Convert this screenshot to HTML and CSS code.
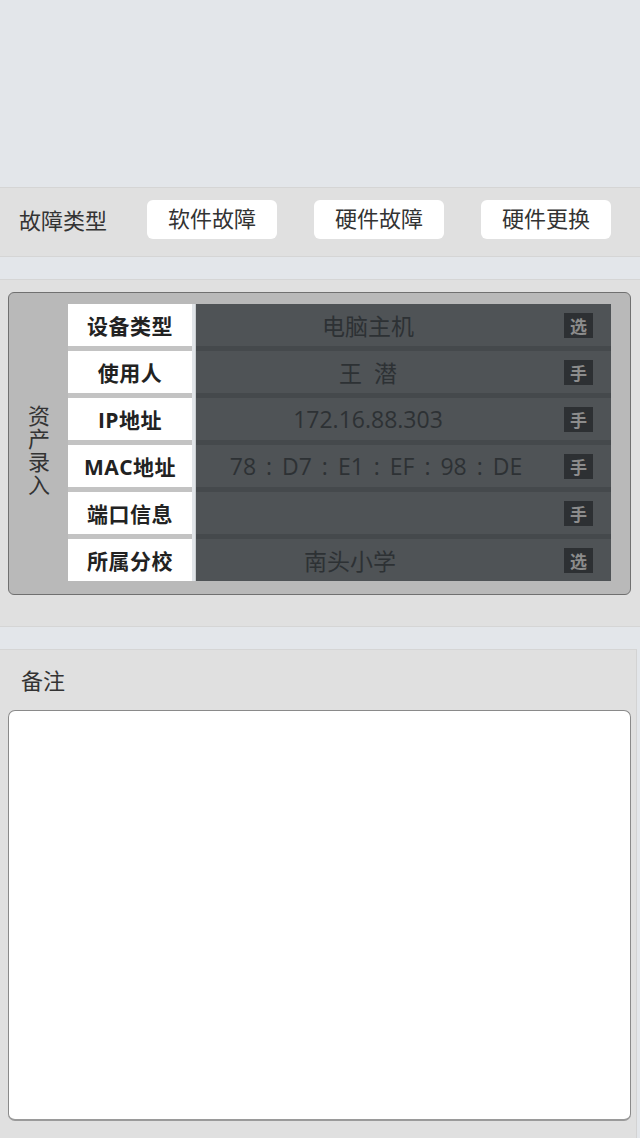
FILE: index.html
```html
<!DOCTYPE html>
<html lang="zh">
<head>
<meta charset="utf-8">
<title>资产录入</title>
<link rel="stylesheet" href="styles.css">
</head>
<body>
<div class="top-space"></div>

<section class="fault">
  <span class="fault-label">故障类型</span>
  <div class="fault-buttons">
    <button class="fault-btn">软件故障</button>
    <button class="fault-btn">硬件故障</button>
    <button class="fault-btn">硬件更换</button>
  </div>
</section>

<div class="spacer"></div>

<section class="asset">
  <div class="panel">
    <div class="side-title">资产录入</div>
    <div class="labels">
      <div class="label">设备类型</div>
      <div class="label">使用人</div>
      <div class="label">IP地址</div>
      <div class="label">MAC地址</div>
      <div class="label">端口信息</div>
      <div class="label">所属分校</div>
    </div>
    <div class="strip"></div>
    <div class="values">
      <div class="value"><span class="value-text">电脑主机</span><span class="badge">选</span></div>
      <div class="value"><span class="value-text">王&nbsp;&nbsp;潜</span><span class="badge">手</span></div>
      <div class="value"><span class="value-text">172.16.88.303</span><span class="badge">手</span></div>
      <div class="value"><span class="value-text mac">78 : D7 : E1 : EF : 98 : DE</span><span class="badge">手</span></div>
      <div class="value"><span class="value-text"></span><span class="badge">手</span></div>
      <div class="value"><span class="value-text shift">南头小学</span><span class="badge">选</span></div>
    </div>
  </div>
</section>

<div class="spacer"></div>

<section class="remark">
  <div class="remark-head">备注</div>
  <div class="remark-box"></div>
</section>
</body>
</html>
```

FILE: styles.css
```css
* { box-sizing: border-box; }

html, body {
  margin: 0;
  padding: 0;
}

body {
  background: #e3e6ea;
  font-family: "Open Sans", "Noto Sans CJK SC", sans-serif;
  color: #333;
  width: 640px;
  height: 1138px;
  overflow: hidden;
}

.top-space {
  height: 187px;
}

.fault {
  height: 70px;
  background: #e0e0e0;
  border-top: 1px solid #d5d5d5;
  border-bottom: 1px solid #d5d5d5;
  display: flex;
  align-items: center;
  padding-left: 19px;
  padding-bottom: 5px;
}

.fault-label {
  font-size: 22px;
  color: #333;
  width: 128px;
  line-height: 1;
}

.fault-buttons {
  display: flex;
  gap: 37px;
}

.fault-btn {
  width: 130px;
  height: 39px;
  border: none;
  border-radius: 6px;
  background: #fff;
  font-family: "Open Sans", "Noto Sans CJK SC", sans-serif;
  font-size: 22px;
  color: #333;
  padding: 0 0 2px;
  line-height: 37px;
}

.spacer {
  height: 22px;
}

.asset {
  background: #e0e0e0;
  border-top: 1px solid #d5d5d5;
  border-bottom: 1px solid #d5d5d5;
  padding: 12px 9px 31px 8px;
}

.panel {
  display: flex;
  background: #b9b9b9;
  border: 1px solid #707070;
  border-radius: 6px;
  padding: 11px 19px 13px 0;
}

.side-title {
  width: 59px;
  writing-mode: vertical-rl;
  text-orientation: upright;
  font-family: "Noto Sans CJK SC", sans-serif;
  font-size: 22px;
  line-height: 59px;
  letter-spacing: 1px;
  color: #333;
  display: flex;
  justify-content: center;
  padding-top: 16px;
}

.labels {
  width: 124px;
  display: flex;
  flex-direction: column;
  gap: 5px;
  background: #c3c3c3;
}

.label {
  height: 42px;
  background: #fff;
  display: flex;
  align-items: center;
  justify-content: center;
  font-size: 21px;
  font-weight: bold;
  color: #222;
  letter-spacing: 0.5px;
}

.strip {
  width: 4px;
  background: #e1e5e9;
  border-right: 1px solid #c9cdd0;
}

.values {
  flex: 1;
  display: flex;
  flex-direction: column;
  gap: 5px;
  background: #45494c;
}

.value {
  height: 42px;
  background: #4f5356;
  display: flex;
  align-items: center;
}

.value-text {
  flex: 1;
  text-align: center;
  padding-right: 24px;
  font-size: 23px;
  color: #2d3134;
  white-space: nowrap;
}

.value-text.mac {
  padding-right: 8px;
  word-spacing: 4px;
}

.value-text.shift {
  padding-right: 60px;
}

.badge {
  width: 29px;
  height: 25px;
  margin-right: 18px;
  background: #2d3033;
  color: #8c8c8c;
  font-family: "Noto Sans CJK SC", sans-serif;
  font-weight: bold;
  font-size: 17px;
  line-height: 25px;
  text-align: center;
}

.remark {
  width: 637px;
  height: 489px;
  background: #e0e0e0;
  border-top: 1px solid #d5d5d5;
  border-right: 1px solid #d3d3d3;
}

.remark-head {
  height: 60px;
  display: flex;
  align-items: center;
  padding-left: 21px;
  padding-bottom: 2px;
  font-size: 22px;
  color: #333;
}

.remark-box {
  margin-left: 8px;
  width: 623px;
  height: 411px;
  background: #fff;
  border: 1px solid #8a8a8a;
  border-bottom: 2px solid #9a9a9a;
  border-radius: 7px;
}
```
